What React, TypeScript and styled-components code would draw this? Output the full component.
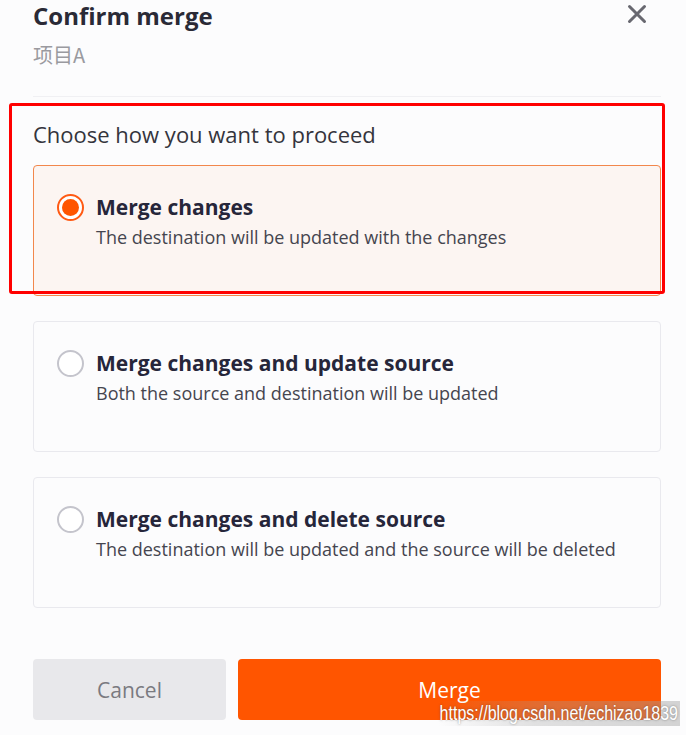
import React, { useState } from "react";
import styled, { createGlobalStyle } from "styled-components";

const Global = createGlobalStyle`
  html, body { margin: 0; padding: 0; background: #fcfcfd; }
  body { font-family: "Open Sans", "Noto Sans", "Noto Sans CJK SC", sans-serif; }
  * { box-sizing: border-box; }
`;

const Page = styled.div`
  position: relative;
  width: 686px;
  height: 735px;
  padding: 0 25px 0 33px;
  display: flex;
  flex-direction: column;
  overflow: hidden;
`;

const Header = styled.div`
  display: flex;
  justify-content: space-between;
  align-items: flex-start;
`;

const Title = styled.h1`
  margin: 0;
  font-size: 24px;
  line-height: 32px;
  font-weight: 700;
  color: #2a2a36;
`;

const CloseButton = styled.button`
  border: 0;
  background: transparent;
  padding: 0;
  margin: 4px 14px 0 0;
  width: 20px;
  height: 20px;
  color: #686870;
  cursor: pointer;
  display: flex;
`;

const Subtitle = styled.div`
  margin-top: 10px;
  font-size: 20px;
  line-height: 26px;
  color: #9a9a9f;
  font-family: "Noto Sans CJK SC", "Open Sans", sans-serif;
`;

const Divider = styled.div`
  margin-top: 28px;
  height: 1px;
  background: #f0f0f3;
`;

const Prompt = styled.div`
  margin-top: 22px;
  font-size: 22px;
  line-height: 30px;
  color: #34343c;
`;

const Options = styled.div`
  margin-top: 16px;
  display: flex;
  flex-direction: column;
  gap: 25px;
`;

const Card = styled.label<{ $selected: boolean }>`
  height: 131px;
  border: 1px solid ${(p) => (p.$selected ? "#f2874c" : "#e9e9ee")};
  background: ${(p) => (p.$selected ? "#fcf5f2" : "#fcfcfd")};
  border-radius: 4px;
  display: flex;
  align-items: flex-start;
  padding: 27px 20px 0 23px;
  gap: 12px;
  cursor: pointer;
`;

const Radio = styled.span<{ $selected: boolean }>`
  flex: none;
  margin-top: 1px;
  width: 27px;
  height: 27px;
  border-radius: 50%;
  border: 2px solid ${(p) => (p.$selected ? "#ff5a14" : "#c4c4cc")};
  background: #fff;
  display: flex;
  align-items: center;
  justify-content: center;
  &::after {
    content: "";
    width: 17px;
    height: 17px;
    border-radius: 50%;
    background: ${(p) => (p.$selected ? "#ff5500" : "transparent")};
  }
`;

const OptionText = styled.div`
  display: flex;
  flex-direction: column;
`;

const OptionTitle = styled.div`
  font-size: 21px;
  line-height: 28px;
  font-weight: 700;
  color: #26263a;
`;

const OptionDesc = styled.div`
  margin-top: 4px;
  font-size: 18px;
  line-height: 24px;
  color: #45454f;
`;

const Footer = styled.div`
  margin-top: 51px;
  display: flex;
  gap: 12px;
`;

const Button = styled.button<{ $primary?: boolean }>`
  height: 61px;
  border: 0;
  border-radius: 4px;
  font-family: inherit;
  font-size: 21px;
  cursor: pointer;
  ${(p) =>
    p.$primary
      ? `flex: 1; background: #ff5500; color: #fff;`
      : `width: 193px; background: #e8e8eb; color: #7a7a80;`}
`;

const Highlight = styled.div`
  position: absolute;
  left: 9px;
  top: 103px;
  width: 656px;
  height: 191px;
  border: 3px solid #ff0000;
  border-radius: 3px;
  pointer-events: none;
`;

const Watermark = styled.div`
  position: absolute;
  right: 6px;
  bottom: 9px;
  padding: 0 2px;
  font-family: "Liberation Sans", Arial, sans-serif;
  font-size: 16px;
  line-height: 20px;
  color: #fff;
  transform: scaleY(1.25);
  transform-origin: bottom right;
  text-shadow: 0 0 2px rgba(60, 60, 60, 0.6);
  background: linear-gradient(to right, rgba(200, 200, 200, 0) 0%, rgba(160, 160, 160, 0.3) 40%, rgba(160, 160, 160, 0.45) 100%);
  pointer-events: none;
`;

const options = [
  {
    title: "Merge changes",
    desc: "The destination will be updated with the changes",
  },
  {
    title: "Merge changes and update source",
    desc: "Both the source and destination will be updated",
  },
  {
    title: "Merge changes and delete source",
    desc: "The destination will be updated and the source will be deleted",
  },
];

export default function App() {
  const [selected, setSelected] = useState(0);
  return (
    <>
      <Global />
      <Page>
        <Header>
          <Title>Confirm merge</Title>
          <CloseButton aria-label="Close">
            <svg width="20" height="20" viewBox="0 0 20 20" fill="none">
              <path d="M2.5 2.5L17.5 17.5M17.5 2.5L2.5 17.5" stroke="currentColor" strokeWidth="3" strokeLinecap="round" />
            </svg>
          </CloseButton>
        </Header>
        <Subtitle>项目A</Subtitle>
        <Divider />
        <Prompt>Choose how you want to proceed</Prompt>
        <Options>
          {options.map((o, i) => (
            <Card key={o.title} $selected={selected === i} onClick={() => setSelected(i)}>
              <Radio $selected={selected === i} />
              <OptionText>
                <OptionTitle>{o.title}</OptionTitle>
                <OptionDesc>{o.desc}</OptionDesc>
              </OptionText>
            </Card>
          ))}
        </Options>
        <Footer>
          <Button>Cancel</Button>
          <Button $primary>Merge</Button>
        </Footer>
        <Highlight />
        <Watermark>https://blog.csdn.net/echizao1839</Watermark>
      </Page>
    </>
  );
}
